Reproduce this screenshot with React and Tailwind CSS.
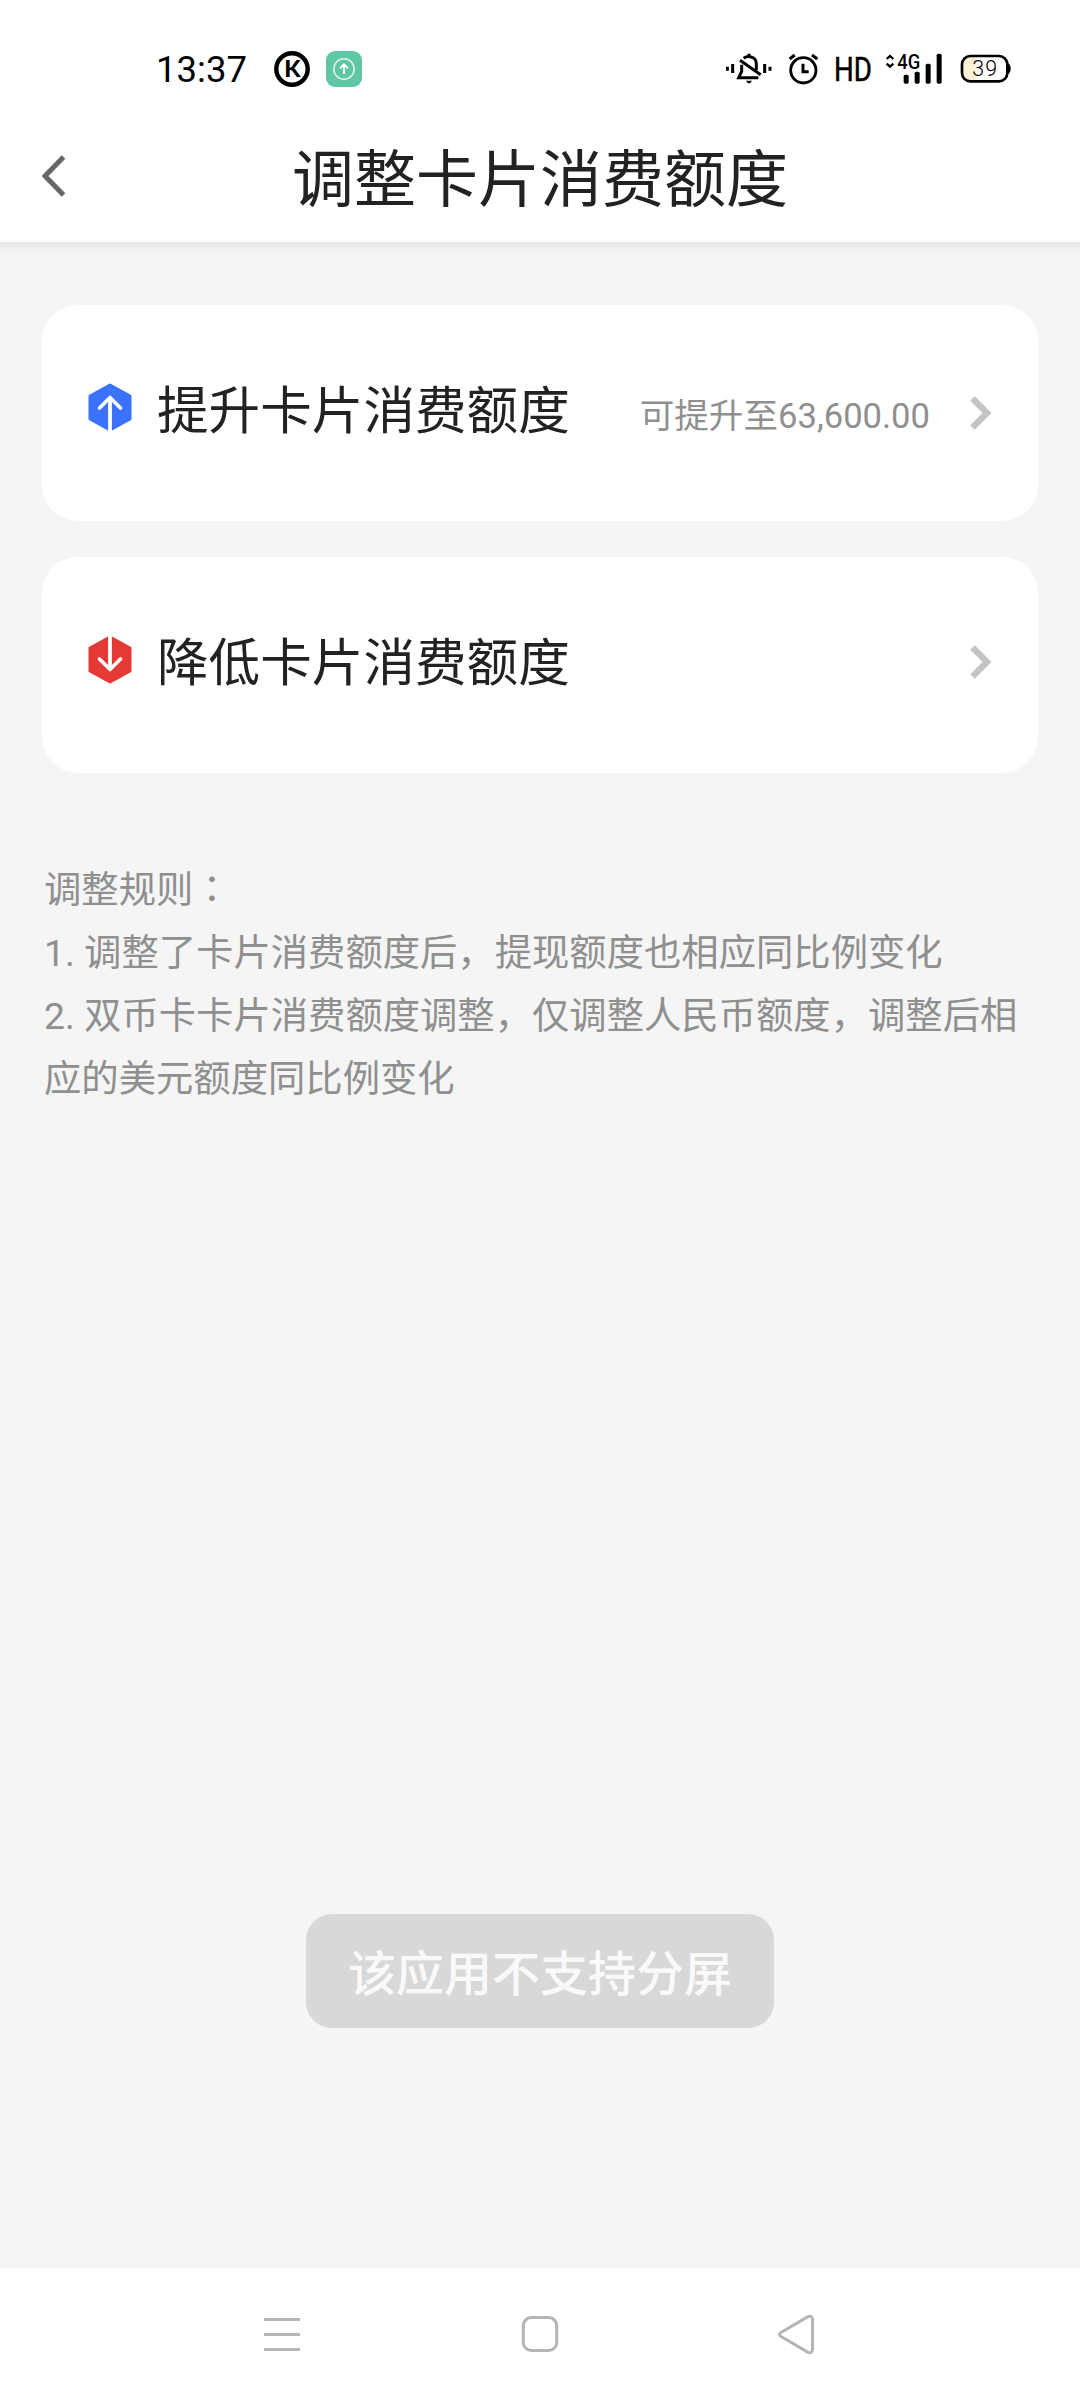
const RULES = [
  "1. 调整了卡片消费额度后，提现额度也相应同比例变化",
  "2. 双币卡卡片消费额度调整，仅调整人民币额度，调整后相应的美元额度同比例变化",
];

function StatusBar() {
  return (
    <div className="flex h-[138px] items-center justify-between pl-[156px] pr-[69px]">
      <div className="flex items-center">
        <svg className="overflow-visible" width="91" height="46" viewBox="0 0 91 46">
          <text
            x="0"
            y="36"
            fontSize="36.5"
            textLength="91"
            className="font-['Roboto',sans-serif]"
          >
            13:37
          </text>
        </svg>
        <svg className="ml-[27px]" width="36" height="36" viewBox="0 0 36 36">
          <circle cx="18" cy="18" r="15.7" fill="none" stroke="#000" strokeWidth="4.4" />
          <text
            x="18.3"
            y="26.3"
            fontSize="23.5"
            textAnchor="middle"
            className="font-['Lato',sans-serif] font-black"
          >
            K
          </text>
        </svg>
        <div className="ml-4 flex size-9 items-center justify-center rounded-[9px] bg-[#5fc7a3]">
          <svg width="24" height="24" viewBox="0 0 24 24" fill="none" stroke="#fff">
            <circle cx="12" cy="12" r="10.2" strokeWidth="1.6" opacity="0.8" />
            <path d="M12 17V8M8 11.3l4-4 4 4" strokeWidth="1.9" />
          </svg>
        </div>
      </div>

      <div className="flex items-center">
        <svg width="46" height="32" viewBox="50 70 138 96" fill="none" stroke="#000">
          <path d="M54 111v12M70 103v27M166 103v27M182 111v12" strokeWidth="9" />
          <path d="M119 72v8M103 86c14-10 38-5 38 17v19" strokeWidth="9" />
          <path d="M97 105v20l-9 19h59M92 92l62 43" strokeWidth="9" />
          <path d="M110 153h18l-6 8h-6z" fill="#000" stroke="none" />
        </svg>
        <svg className="ml-4" width="31" height="32" viewBox="236 70 93 96" fill="none" stroke="#000">
          <circle cx="282" cy="122" r="38" strokeWidth="8.5" />
          <path d="M241 88l15-12M308 76l16 12M281 102v24h17" strokeWidth="9" />
        </svg>
        <svg className="ml-[15px] overflow-visible" width="38" height="40" viewBox="0 0 38 40">
          <text
            x="0"
            y="31.6"
            fontSize="33"
            textLength="38"
            lengthAdjust="spacingAndGlyphs"
            className="font-['Roboto',sans-serif]"
            stroke="#000"
            strokeWidth="0.5"
          >
            HD
          </text>
        </svg>
        <svg
          className="ml-[13px] overflow-visible"
          width="57"
          height="40"
          viewBox="526 58 171 120"
          fill="none"
          stroke="#000"
        >
          <path d="M531 88l10-9 10 9M531 102l10 9 10-9" strokeWidth="7" />
          <text
            x="563"
            y="117"
            fontSize="59"
            textLength="69"
            lengthAdjust="spacingAndGlyphs"
            fill="#000"
            stroke="none"
            className="font-['Roboto',sans-serif] font-medium"
          >
            4G
          </text>
          <g fill="#000" stroke="none">
            <rect x="582" y="135" width="15" height="27" rx="5" />
            <rect x="615" y="126" width="15" height="36" rx="5" />
            <rect x="648" y="102" width="15" height="60" rx="5" />
            <rect x="681" y="72" width="15" height="90" rx="5" />
          </g>
        </svg>
        <svg className="ml-[18px]" width="51" height="32" viewBox="751 70 153 96">
          <path d="M800 79h-18q-25 0-25 25v26q0 25 25 25h18z" fill="#fdefd6" />
          <rect x="757" y="79" width="136" height="76" rx="25" fill="none" stroke="#000" strokeWidth="8" />
          <path d="M895 101q8 4 8 16t-8 16z" />
          <text
            x="788"
            y="138"
            fontSize="64"
            textLength="74"
            className="font-['Roboto',sans-serif] font-light"
          >
            39
          </text>
        </svg>
      </div>
    </div>
  );
}

function HexIcon({ color, down }) {
  return (
    <svg
      width="44"
      height="49"
      viewBox="0 0 44 49"
      fill="none"
      className={down ? "rotate-180" : ""}
    >
      <path
        d="M22 2 42 13V36L22 47 2 36V13Z"
        fill={color}
        stroke={color}
        strokeWidth="3"
        strokeLinejoin="round"
      />
      <path d="M22 15V49" stroke="#fff" strokeWidth="3.8" />
      <path
        d="M11.5 25 22 14.5 32.5 25"
        stroke="#fff"
        strokeWidth="3.6"
        strokeLinecap="round"
        strokeLinejoin="round"
      />
    </svg>
  );
}

function ActionCard({ color, down, label, note }) {
  return (
    <div className="flex h-[216px] items-center rounded-[36px] bg-white px-[46px]">
      <div className="pb-3">
        <HexIcon color={color} down={down} />
      </div>
      <span className="ml-[25px] pb-0.5 text-[51.6px] leading-none text-[#222]">{label}</span>
      <div className={note ? "ml-auto flex items-center" : "ml-auto flex items-center pb-1.5"}>
        {note && (
          <span className="mr-10 pt-1.5 text-[34.6px] leading-none text-[#8f8f8f]">{note}</span>
        )}
        <svg width="22" height="34" viewBox="0 0 22 34" fill="none" stroke="#c4c4c6">
          <path d="M2.5 2.5 17 17 2.5 31.5" strokeWidth="6.4" />
        </svg>
      </div>
    </div>
  );
}

function App() {
  return (
    <div className="relative flex h-[2400px] w-[1080px] flex-col bg-[#f5f5f5] font-['Roboto','Noto_Sans_CJK_SC',sans-serif]">
      <header className="h-[242px] bg-white">
        <StatusBar />
        <div className="flex h-[80px] items-center px-[42px]">
          <svg className="mb-1" width="24" height="42" viewBox="0 0 24 42" fill="none" stroke="#666">
            <path d="M21.5 2 3 21l18.5 19" strokeWidth="5" />
          </svg>
          <h1 className="mr-6 flex-1 pt-1.5 text-center text-[62px] leading-none text-[#222]">
            调整卡片消费额度
          </h1>
        </div>
      </header>
      <div className="h-2.5 bg-linear-to-b from-[#e6e6e6] to-[#f5f5f5]" />

      <main className="flex-1 px-[42px] pt-[53px]">
        <div className="flex flex-col gap-9">
          <ActionCard color="#3b72fc" label="提升卡片消费额度" note="可提升至63,600.00" />
          <ActionCard color="#e53935" label="降低卡片消费额度" down />
        </div>
        <div className="mt-[83px] pl-0.5 text-[37.35px] leading-[63px] text-[#8f8f8f]">
          <p>
            调整规则<span className="font-['Noto_Sans_CJK_TC',sans-serif]">：</span>
          </p>
          {RULES.map((rule) => (
            <p key={rule}>{rule}</p>
          ))}
        </div>
      </main>

      <div className="absolute left-[306px] top-[1914px] flex h-[114px] w-[468px] items-center justify-center rounded-[26px] bg-[#d8d8d8] pt-2 text-[48px] font-medium leading-none text-[#f9f9f9]">
        该应用不支持分屏
      </div>

      <nav className="flex h-[132px] items-start justify-between bg-white pl-[264px] pr-[265px] pt-[46px]">
        <svg width="36" height="42" viewBox="0 0 36 42" stroke="#b5b5b5" strokeWidth="3">
          <path d="M0 5.5h36M0 20.5h36M0 35.5h36" />
        </svg>
        <svg className="ml-0.5" width="38" height="42" viewBox="0 0 38 42" fill="none" stroke="#b5b5b5" strokeWidth="3">
          <rect x="2.3" y="3.5" width="33.4" height="33" rx="8" />
        </svg>
        <svg width="38" height="42" viewBox="0 0 38 42" fill="none" stroke="#b5b5b5" strokeWidth="3">
          <path d="M31 2.6 4 18.5q-3 2 0 4L31 38.4q4 1.5 4.5-2.5V5.1q-.5-4-4.5-2.5z" />
        </svg>
      </nav>
    </div>
  );
}

export default App;
